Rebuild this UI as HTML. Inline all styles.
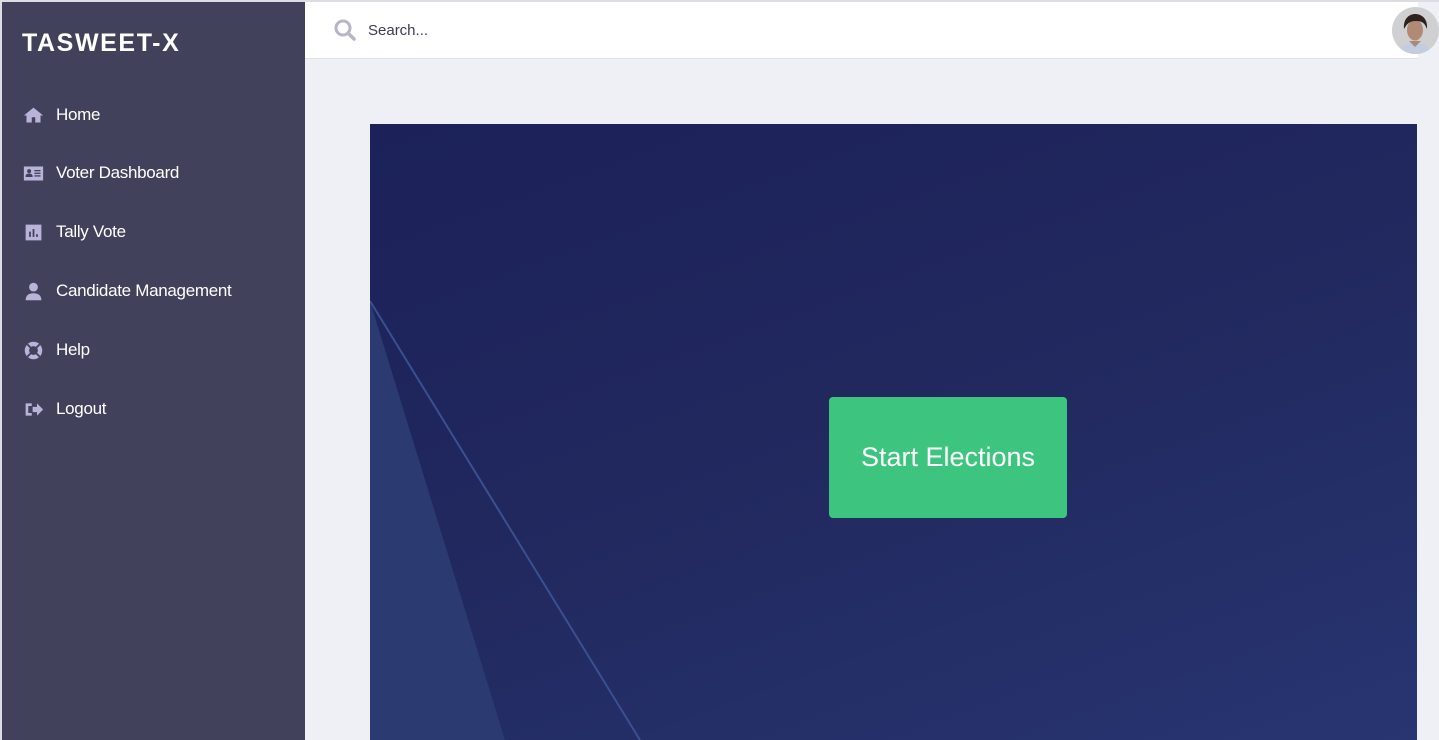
<!DOCTYPE html>
<html><head><meta charset="utf-8"><style>
*{margin:0;padding:0;box-sizing:border-box}
body{width:1439px;height:740px;overflow:hidden;background:#eff0f5;font-family:"Liberation Sans",sans-serif;position:relative}
.topline{position:absolute;left:0;top:0;width:1439px;height:2px;background:#dcdce2}
.leftline{position:absolute;left:0;top:0;width:2px;height:740px;background:#dcdce2}
.side{position:absolute;left:2px;top:2px;width:303px;height:738px;background:#42415b}
.logo{position:absolute;left:20px;top:27px;color:#fff;font-weight:bold;font-size:25px;letter-spacing:1.6px}
.item{position:absolute;left:23px;color:#fff;font-size:17px;height:24px;display:flex;align-items:center;letter-spacing:-0.3px}
.item svg{width:21px;height:21px;margin-right:12px;fill:#b9b3da}
.header{position:absolute;left:305px;top:2px;width:1113px;height:57px;background:#fff;border-bottom:1px solid #e0e0e6}
.search{position:absolute;left:368px;top:22px;font-size:15px;color:#3c3b55}
.avatar{position:absolute;left:1392px;top:7px;width:47px;height:47px;border-radius:50%;overflow:hidden}
.card{position:absolute;left:370px;top:124px;width:1047px;height:616px;background:linear-gradient(160deg,#1c2159 0%,#21295f 50%,#283571 100%);overflow:hidden}
.btn{position:absolute;left:829px;top:397px;width:238px;height:121px;background:#3dc47f;border-radius:4px;color:#fff;font-size:27px;display:flex;align-items:center;justify-content:center}
</style></head><body>
<div class="side">
<div class="logo">TASWEET-X</div>
</div>
<div class="topline"></div><div class="leftline"></div>
<div class="item" style="top:103px"><svg viewBox="0 0 24 24"><path d="M12 3L1 12h3v8h6v-6h4v6h6v-8h3z"/></svg>Home</div>
<div class="item" style="top:161px"><svg viewBox="0 0 24 24"><path d="M1 4h22v16H1zM3 15c0-2 2-3 4-3s4 1 4 3v1H3zM7 7a2.3 2.3 0 110 4.6A2.3 2.3 0 017 7z" fill-rule="evenodd"/><rect x="13" y="8" width="7" height="1.5" fill="#42415b"/><rect x="13" y="11" width="7" height="1.5" fill="#42415b"/><rect x="13" y="14" width="7" height="1.5" fill="#42415b"/></svg>Voter Dashboard</div>
<div class="item" style="top:220px"><svg viewBox="0 0 24 24"><path d="M3 3h18v18H3z"/><rect x="7" y="11" width="2" height="6" fill="#42415b"/><rect x="11" y="8" width="2" height="9" fill="#42415b"/><rect x="15" y="14" width="2" height="3" fill="#42415b"/></svg>Tally Vote</div>
<div class="item" style="top:279px"><svg viewBox="0 0 24 24"><circle cx="12" cy="7" r="5"/><path d="M3 22c0-6 4-8 9-8s9 2 9 8z"/></svg>Candidate Management</div>
<div class="item" style="top:338px"><svg viewBox="0 0 24 24"><path d="M12 2a10 10 0 100 20 10 10 0 000-20zm0 5a5 5 0 110 10 5 5 0 010-10z" fill-rule="evenodd"/><path d="M5 5l4 4M19 5l-4 4M5 19l4-4M19 19l-4-4" stroke="#42415b" stroke-width="2.2"/></svg>Help</div>
<div class="item" style="top:397px"><svg viewBox="0 0 24 24"><path d="M3 5h7v3H6v8h4v3H3z"/><path d="M11 9h5V5l7 7-7 7v-4h-5z"/></svg>Logout</div>
<div class="header">
<svg style="position:absolute;left:28px;top:16px" width="24" height="24" viewBox="0 0 24 24"><circle cx="10" cy="10" r="7" fill="none" stroke="#b7b5c6" stroke-width="3"/><path d="M15 15l6 6" stroke="#b7b5c6" stroke-width="3.5" stroke-linecap="round"/></svg>
</div>
<div class="search">Search...</div>
<div class="avatar"><svg width="47" height="47" viewBox="0 0 47 47"><rect width="47" height="47" fill="#d0d0d2"/><path d="M6 47c2-9 8-11 17-11s14 2 17 11z" fill="#c4cde0"/><path d="M17 34l6 6 6-6z" fill="#a88a78"/><ellipse cx="23" cy="23" rx="8" ry="10.5" fill="#b08a74"/><path d="M12 22c-1-11 6-15 11-15s13 3 12 15c-2-5-4-8-11-8s-9 3-12 8z" fill="#2e221c"/></svg></div>
<div class="card">
<svg width="1047" height="616" style="position:absolute;left:0;top:0"><polygon points="0,177 135,616 0,616" fill="#2c3a72"/><line x1="0" y1="177" x2="270" y2="616" stroke="#3a5090" stroke-width="2"/></svg>
</div>
<div class="btn">Start Elections</div>
</body></html>
